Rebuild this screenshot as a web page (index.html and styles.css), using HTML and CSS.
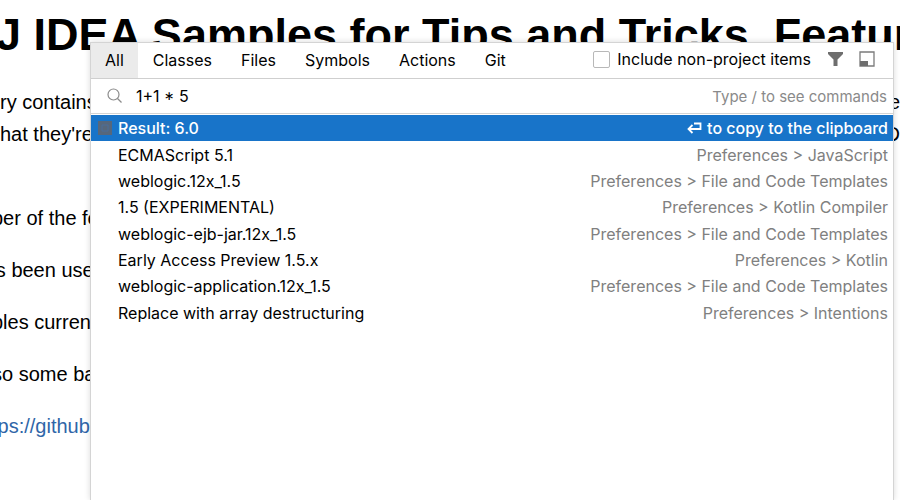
FILE: index.html
```html
<!DOCTYPE html>
<html lang="en">
<head>
<meta charset="utf-8">
<title>Search Everywhere</title>
<link rel="stylesheet" href="styles.css">
</head>
<body>
<article class="readme">
  <h1>J IDEA Samples for Tips and Tricks, Featur</h1>
  <p class="line"><span>ry contains</span><span>e</span></p>
  <p class="line intro-end"><span>hat they're</span><span>D</span></p>
  <p>ber of the fe</p>
  <p>'s been use</p>
  <p>bles curren</p>
  <p>so some ba</p>
  <p><a href="#">tps://github.</a></p>
</article>

<section class="popup" aria-label="Search Everywhere">
  <header class="bar">
    <nav class="tabs">
      <button class="tab active" type="button">All</button>
      <button class="tab" type="button">Classes</button>
      <button class="tab" type="button">Files</button>
      <button class="tab" type="button">Symbols</button>
      <button class="tab" type="button">Actions</button>
      <button class="tab" type="button">Git</button>
    </nav>
    <div class="tools">
      <label class="check"><input type="checkbox">Include non-project items</label>
      <button class="tool" type="button" aria-label="Filter">
        <svg width="16" height="16" viewBox="0 0 16 16"><path d="M1 1h15v2L10.500 8.500V15h-4V8.500L1 3z" fill="#6e6e6e"/></svg>
      </button>
      <button class="tool" type="button" aria-label="Open in tool window">
        <svg width="16" height="16" viewBox="0 0 16 16"><path d="M1 1h14v14H1z" fill="none" stroke="#7b7b7b" stroke-width="1.300"/><path d="M1 10h8v5H1z" fill="#6e6e6e"/></svg>
      </button>
    </div>
  </header>
  <div class="search">
    <svg class="lens" width="16" height="16" viewBox="0 0 16 16" fill="none" stroke="#8c8c8c" stroke-width="1.200"><circle cx="6.500" cy="6.500" r="5.500"/><path d="M10.500 10.500l4 4"/></svg>
    <input class="query" type="text" value="1+1 * 5" aria-label="Search query">
    <span class="hint">Type / to see commands</span>
  </div>
  <ul class="results">
    <li class="row selected">
      <svg class="mark" width="14" height="14" viewBox="0 0 14 14"><path d="M0 0h14v14H0z" fill="#56677c"/><path d="M4 4h6v6H4z" fill="none" stroke="#4b6f99"/></svg>
      <span class="name">Result: 6.0</span>
      <span class="place"><svg width="15" height="12" viewBox="0 0 15 12" fill="none" stroke="#fff" stroke-width="1.800"><path d="M7 1.500h6.500v5.500H2M5.500 3L1.500 7L5.500 11"/></svg>to copy to the clipboard</span>
    </li>
    <li class="row"><span class="name">ECMAScript 5.1</span><span class="place">Preferences &gt; JavaScript</span></li>
    <li class="row"><span class="name">weblogic.12x_1.5</span><span class="place">Preferences &gt; File and Code Templates</span></li>
    <li class="row"><span class="name">1.5 (EXPERIMENTAL)</span><span class="place">Preferences &gt; Kotlin Compiler</span></li>
    <li class="row"><span class="name">weblogic-ejb-jar.12x_1.5</span><span class="place">Preferences &gt; File and Code Templates</span></li>
    <li class="row"><span class="name">Early Access Preview 1.5.x</span><span class="place">Preferences &gt; Kotlin</span></li>
    <li class="row"><span class="name">weblogic-application.12x_1.5</span><span class="place">Preferences &gt; File and Code Templates</span></li>
    <li class="row"><span class="name">Replace with array destructuring</span><span class="place">Preferences &gt; Intentions</span></li>
  </ul>
</section>
</body>
</html>
```
FILE: styles.css
```css
* {
  box-sizing: border-box;
}

body {
  margin: 0;
  min-height: 100vh;
  position: relative;
  overflow: hidden;
  background: #fff;
  color: #000;
  font-family: "Liberation Sans", Arial, sans-serif;
}

.readme {
  padding-top: 8px;
  font-size: 20px;
  line-height: 32px;
  white-space: nowrap;
}

.readme h1 {
  margin: 0 0 24px -4px;
  font-size: 45px;
  line-height: 54px;
}

.readme p {
  margin: 0 0 20px -8px;
}

.readme .line {
  display: flex;
  justify-content: space-between;
  margin: 0;
}

.readme .intro-end {
  margin-bottom: 52px;
}

.readme a {
  color: #2f66a8;
  text-decoration: none;
}

.popup {
  position: absolute;
  top: 42px;
  right: 6px;
  bottom: 0;
  left: 90px;
  background: #fff;
  border: solid #d4d4d4;
  border-width: 1px 1px 0;
  box-shadow: 0 0 6px rgba(0, 0, 0, 0.15);
  font-family: Inter, "Noto Sans", sans-serif;
  font-size: 16px;
}

.bar {
  display: flex;
  justify-content: space-between;
  height: 36px;
  border-bottom: 1px solid #cfcfcf;
}

.tabs,
.tools {
  display: flex;
}

.tabs {
  gap: 1px;
}

.tab {
  padding: 0 14px 2px;
  border: 0;
  background: none;
  color: #000;
  font: inherit;
}

.tab.active {
  background: #ebebeb;
}

.tools {
  align-items: center;
  gap: 16px;
  padding: 0 18px 3px 0;
}

.check {
  display: flex;
  align-items: center;
  gap: 7px;
}

.check input {
  appearance: none;
  width: 17px;
  height: 17px;
  margin: 0;
  border: 1px solid #b8b8b8;
  border-radius: 2px;
  background: #fff;
}

.tool {
  display: flex;
  padding: 0;
  border: 0;
  background: none;
}

.search {
  display: flex;
  align-items: center;
  height: 35px;
  padding: 0 6px 0 16px;
  border-bottom: 1px solid #d4d4d4;
}

.query {
  flex: 1;
  min-width: 0;
  margin-left: 13px;
  padding: 0;
  border: 0;
  outline: 0;
  background: none;
  color: #000;
  font: inherit;
}

.hint {
  color: #8a8a8a;
  font-size: 15px;
}

.results {
  display: grid;
  grid-auto-rows: 1fr;
  min-height: 212px;
  margin: 0;
  padding: 1px 0 0;
  list-style: none;
}

.row {
  display: flex;
  align-items: center;
  justify-content: space-between;
  padding: 0 5px 0 27px;
  line-height: 26px;
}

.place {
  display: flex;
  align-items: center;
  gap: 5px;
  color: #808080;
}

.selected {
  padding-left: 7px;
  background: #1874c9;
  color: #fff;
  font-weight: 500;
}

.selected .name {
  flex: 1;
  margin-left: 6px;
}

.selected .place {
  color: #fff;
}
```
